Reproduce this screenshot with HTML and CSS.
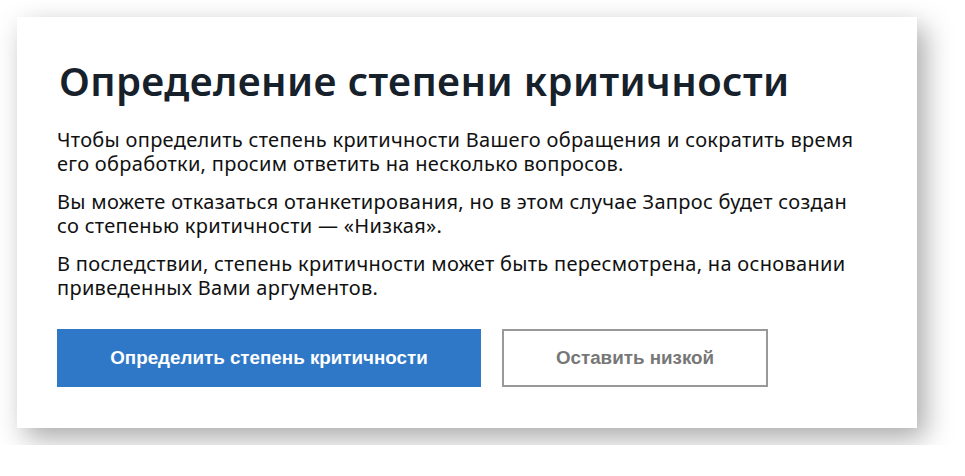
FILE: index.html
```html
<!DOCTYPE html>
<html lang="ru">
<head>
<meta charset="utf-8">
<link rel="stylesheet" href="styles.css">
</head>
<body>
<div class="card">
  <h1 class="title">Определение степени критичности</h1>
  <p class="text">Чтобы определить степень критичности Вашего обращения и сократить время его обработки, просим ответить на несколько вопросов.</p>
  <p class="text">Вы можете отказаться отанкетирования, но в этом случае Запрос будет создан со степенью критичности — «Низкая».</p>
  <p class="text">В последствии, степень критичности может быть пересмотрена, на основании приведенных Вами аргументов.</p>
  <div class="actions">
    <button class="btn btn-primary">Определить степень критичности</button>
    <button class="btn btn-secondary">Оставить низкой</button>
  </div>
</div>
</body>
</html>
```
FILE: styles.css
```css
html, body {
  margin: 0;
  padding: 0;
  background: #fff;
}
body {
  padding: 17px;
}
.card {
  width: 900px;
  height: 411px;
  box-sizing: border-box;
  background: #fff;
  padding: 40px 40px 0 40px;
  box-shadow: 8px 10px 26px rgba(0, 0, 0, 0.34);
  font-family: "Noto Sans", "Open Sans", sans-serif;
}
.title {
  margin: 0 0 23px 2px;
  font-size: 40px;
  line-height: 48px;
  font-weight: 600;
  color: #17212b;
  letter-spacing: 0.4px;
}
.text {
  margin: 0 0 15px 0;
  width: 815px;
  font-size: 20px;
  line-height: 23.5px;
  letter-spacing: 0.3px;
  color: #111;
}
.actions {
  display: flex;
  gap: 21px;
  margin-top: 30px;
}
.btn {
  height: 58px;
  font-family: "Liberation Sans", Arial, sans-serif;
  font-weight: bold;
  font-size: 18.8px;
  cursor: pointer;
}
.btn-primary {
  width: 424px;
  background: #2f78c8;
  color: #fff;
  border: none;
}
.btn-secondary {
  width: 266px;
  background: #fff;
  color: #777;
  border: 2px solid #999;
}
```
